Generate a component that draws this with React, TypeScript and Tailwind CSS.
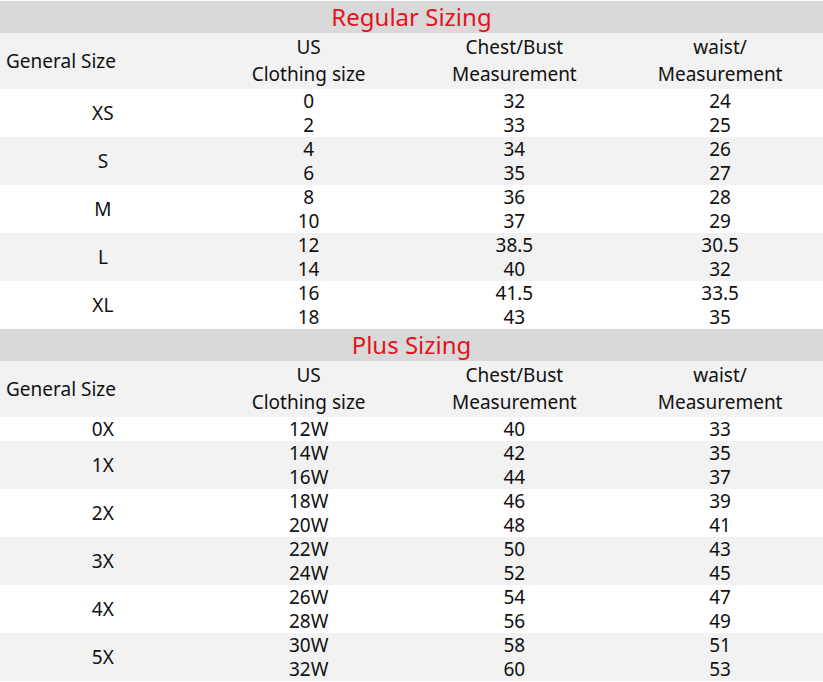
const regular = [
  { size: "XS", us: ["0", "2"], chest: ["32", "33"], waist: ["24", "25"] },
  { size: "S", us: ["4", "6"], chest: ["34", "35"], waist: ["26", "27"] },
  { size: "M", us: ["8", "10"], chest: ["36", "37"], waist: ["28", "29"] },
  { size: "L", us: ["12", "14"], chest: ["38.5", "40"], waist: ["30.5", "32"] },
  { size: "XL", us: ["16", "18"], chest: ["41.5", "43"], waist: ["33.5", "35"] },
];

const plus = [
  { size: "0X", us: ["12W"], chest: ["40"], waist: ["33"] },
  { size: "1X", us: ["14W", "16W"], chest: ["42", "44"], waist: ["35", "37"] },
  { size: "2X", us: ["18W", "20W"], chest: ["46", "48"], waist: ["39", "41"] },
  { size: "3X", us: ["22W", "24W"], chest: ["50", "52"], waist: ["43", "45"] },
  { size: "4X", us: ["26W", "28W"], chest: ["54", "56"], waist: ["47", "49"] },
  { size: "5X", us: ["30W", "32W"], chest: ["58", "60"], waist: ["51", "53"] },
];

type Group = { size: string; us: string[]; chest: string[]; waist: string[] };

const Stack = ({ values }: { values: string[] }) => (
  <div className="flex flex-col items-center">
    {values.map((v) => (
      <div key={v} className="h-6 leading-6">
        {v}
      </div>
    ))}
  </div>
);

const Section = ({
  title,
  groups,
  startGray,
}: {
  title: string;
  groups: Group[];
  startGray: boolean;
}) => {
  return (
    <div>
      <div className="h-8 bg-[#d9d9d9] flex items-center justify-center text-[24px] leading-8 text-[#e3141c]">
        {title}
      </div>
      <div className="h-14 bg-[#f2f2f2] grid grid-cols-4 items-center leading-[27px]">
        <div className="pl-1.5">General Size</div>
        <div className="text-center">
          US
          <br />
          Clothing size
        </div>
        <div className="text-center">
          Chest/Bust
          <br />
          Measurement
        </div>
        <div className="text-center">
          waist/
          <br />
          Measurement
        </div>
      </div>
      {groups.map((g, i) => {
        const gray = startGray ? i % 2 == 0 : i % 2 == 1;
        return (
          <div
            key={g.size}
            className={
              "grid grid-cols-4 items-center leading-6 " +
              (gray ? "bg-[#f2f2f2]" : "bg-white")
            }
          >
            <div className="text-center">{g.size}</div>
            <Stack values={g.us} />
            <Stack values={g.chest} />
            <Stack values={g.waist} />
          </div>
        );
      })}
    </div>
  );
};

export default function App() {
  return (
    <div
      className="w-[823px] h-[682px] overflow-hidden bg-white text-[19px] text-[#111] pt-px"
      style={{ fontFamily: '"Noto Sans", "Open Sans", sans-serif' }}
    >
      <Section title="Regular Sizing" groups={regular} startGray={false} />
      <Section title="Plus Sizing" groups={plus} startGray={false} />
    </div>
  );
}
